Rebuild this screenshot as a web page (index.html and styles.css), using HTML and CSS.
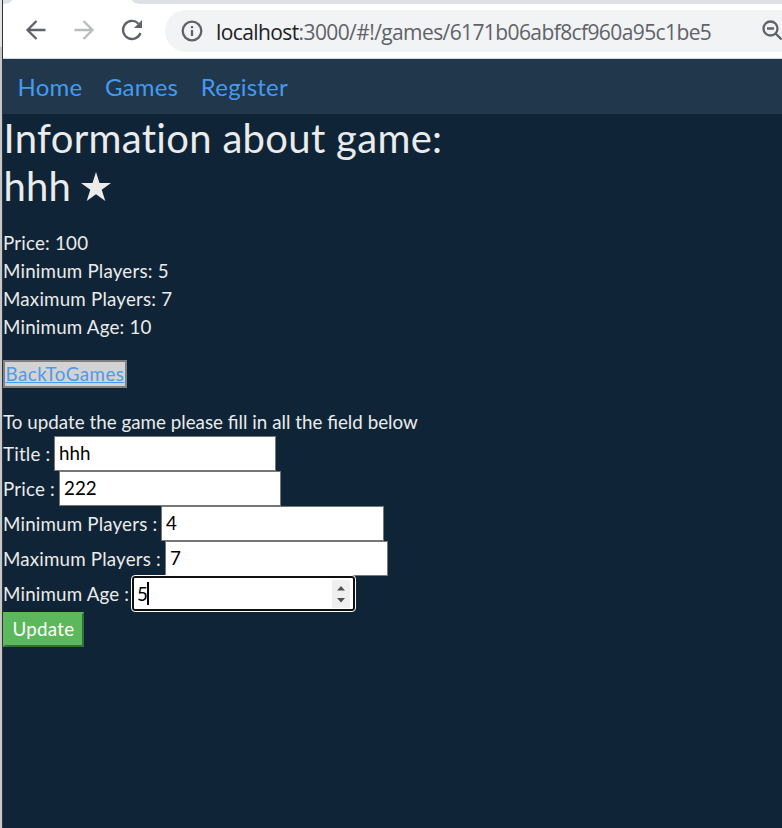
FILE: index.html
```html
<!DOCTYPE html>
<html lang="en">
<head>
<meta charset="utf-8">
<title>Games</title>
<link rel="stylesheet" href="styles.css">
</head>
<body>
<div class="edge"></div>
<div class="window">
  <div class="tabs"><div class="tab tab-left"></div><div class="tab tab-right"></div></div>
  <div class="toolbar">
    <svg class="tool back" width="24" height="24" viewBox="0 0 24 24"><path d="M21.5 12H3.5M12.5 3L3.5 12l9 9"/></svg>
    <svg class="tool forward" width="24" height="24" viewBox="0 0 24 24"><path d="M2.5 12h18M11.500 3l9 9-9 9"/></svg>
    <svg class="tool reload" width="24" height="24" viewBox="0 0 24 24"><path d="M20.500 15A9 9 0 1 1 18.500 5.700"/><path class="solid" d="M22 2v8h-8z"/></svg>
    <div class="address">
      <svg class="info" width="22" height="22" viewBox="0 0 22 22"><circle cx="11" cy="11" r="9.300"/><path d="M11 10v6M11 6v2.200"/></svg>
      <span class="url"><span class="host">localhost</span>:3000/#!/games/6171b06abf8cf960a95c1be5</span>
      <svg class="lens" width="22" height="22" viewBox="0 0 22 22"><circle cx="8.500" cy="8.500" r="7"/><path d="M13.500 13.500l6 6M5 8.500h7"/></svg>
    </div>
  </div>
  <nav class="nav"><a>Home</a><a>Games</a><a>Register</a></nav>
  <main>
    <h1><span class="heading">Information about game:</span><br>hhh <svg class="star" width="30" height="29" viewBox="0 0 30 29"><path d="M15 0l3.500 11H30l-9.300 6.800L24.300 29 15 22.200 5.700 29l3.600-11.200L0 11h11.500z"/></svg></h1>
    <p class="info-lines">Price: 100<br>Minimum Players: 5<br>Maximum Players: 7<br>Minimum Age: 10</p>
    <a class="back-link">BackToGames</a>
    <p class="hint">To update the game please fill in all the field below</p>
    <form>
      <div class="row"><label class="l-title">Title :</label><div class="field">hhh</div></div>
      <div class="row"><label class="l-price">Price :</label><div class="field">222</div></div>
      <div class="row"><label class="l-min">Minimum Players :</label><div class="field wide">4</div></div>
      <div class="row"><label class="l-max">Maximum Players :</label><div class="field wide">7</div></div>
      <div class="row"><label class="l-age">Minimum Age :</label><div class="field wide focused">5<i class="caret"></i><span class="spinner"><svg width="18" height="28" viewBox="0 0 18 28"><path d="M5 10.500l4-4.500 4 4.500zM5 18l4 4.500 4-4.500z"/></svg></span></div></div>
      <button type="button">Update</button>
    </form>
  </main>
</div>
</body>
</html>
```
FILE: styles.css
```css
* { box-sizing: border-box; }
body { margin: 0; height: 828px; overflow: hidden; display: flex; background: #0f2537; color: #ebebeb; font: 18.75px/28px Lato, sans-serif; }
.edge { width: 3px; flex: none; background: linear-gradient(#e4e4e4 0 47px, #c7c7c7 47px) 0 0 / 2px 100% no-repeat #303438; }
.window { width: 779px; flex: none; }
.tabs { height: 4px; background: #fff; display: flex; justify-content: space-between; }
.tab { background: #dee1e6; height: 4px; }
.tab-left { width: 9px; border-bottom-right-radius: 9px 4px; }
.tab-right { width: 650px; border-bottom-left-radius: 9px 4px; }
.toolbar { height: 55px; background: #fff; border-bottom: 1px solid #d5d7da; display: flex; align-items: center; padding: 0 0 0 21px; }
.tool { margin-right: 24px; flex: none; position: relative; top: -1px; }
svg { fill: none; stroke: #5f6368; stroke-width: 2.3; }
.forward { stroke: #babcbe; }
.solid { fill: #5f6368; stroke: none; }
.address { width: 617px; height: 42px; flex: none; margin-left: -3px; background: #f1f3f4; border-radius: 21px 0 0 21px; display: flex; align-items: center; overflow: hidden; padding-left: 16px; }
.info, .lens { flex: none; }
.url { width: 546px; flex: none; margin-left: 13px; padding-top: 1px; color: #5f6368; font: 21px/28px "Open Sans", sans-serif; letter-spacing: -.6px; white-space: nowrap; }
.host { color: #202124; }
.nav { height: 55px; background: #20374c; display: flex; gap: 23px; padding: 0 14.5px; color: #4799ef; font-size: 24px; letter-spacing: .2px; line-height: 56px; }
.nav a { margin-right: -.35px; }
h1 { margin: 0; font-size: 40px; line-height: 48px; font-weight: 400; height: 105px; letter-spacing: .2px; padding-left: .5px; }
.heading { letter-spacing: .31px; }
.star { fill: #ebebeb; stroke: none; vertical-align: 0; margin-left: -1px; }
.info-lines { margin: 10px 0 19px; letter-spacing: .2px; }
.back-link { display: block; width: 124px; height: 28px; border: 2px solid #808080; background: #d3d3d3; color: #4c9be8; text-decoration: underline; line-height: 24px; padding-left: .5px; letter-spacing: .47px; }
.hint { margin: 20px 0 0; word-spacing: .1px; }
.row { display: flex; height: 35px; line-height: 35px; white-space: nowrap; }
label { flex: none; letter-spacing: .18px; }
.l-title { width: 51px; }
.l-price { width: 56px; }
.l-min { width: 158px; }
.l-max { width: 162px; }
.l-age { width: 129px; }
.field { width: 222px; height: 35px; flex: none; background: #fff; border: 1px solid #767676; color: #000; padding-left: 4px; line-height: 32px; }
.wide { width: 223px; }
.focused { position: relative; border: 2px solid #101010; border-radius: 3px; outline: 1px solid #fff; padding-left: 3px; line-height: 33px; display: flex; align-items: center; }
.caret { width: 2px; height: 23px; margin-left: -1px; background: #000; }
.spinner { width: 18px; height: 28px; margin-left: auto; margin-right: 3px; background: #efefef; }
.spinner svg { display: block; fill: #505050; stroke: none; }
button { display: block; width: 81px; height: 35px; margin-top: 1px; padding: 0 0 2px; border: 2px solid; border-color: #5cb85c #347034 #347034 #5cb85c; background: #5cb85c; color: #fff; font: 18.75px/29px Lato, sans-serif; letter-spacing: .3px; }
```
